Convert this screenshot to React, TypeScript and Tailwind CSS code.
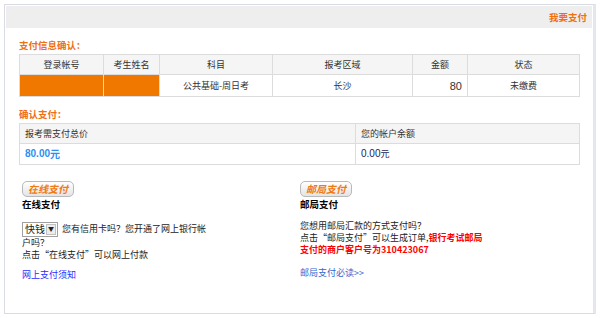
import React from "react";

const font = { fontFamily: '"Noto Sans CJK SC", "Liberation Sans", sans-serif' };

function Btn({ label }: { label: string }) {
  return (
    <div className="flex h-[16px] w-[52px] items-center justify-center rounded-[5px] border border-[#b9b9b9] bg-gradient-to-b from-white to-[#e4e4e4] text-[10px] font-bold italic leading-none text-[#f07a10]">
      {label}
    </div>
  );
}

export default function App() {
  return (
    <div className="h-[318px] w-[600px] bg-white pt-[4px] pl-[4px] text-[9px] leading-[12px] text-[#222]" style={font}>
      <div className="h-[310px] w-[592px] border border-[#d9dde3] border-r-[3px] border-r-[#e3e7ed] p-px">
        <div className="flex h-[22px] items-center justify-end bg-[#eeeeee] pr-[5px] text-[9.5px] font-bold text-[#f07010]">
          我要支付
        </div>
        <div className="pl-[13px] pr-[12px]">
          <div className="mt-[11px] text-[9.5px] font-bold text-[#f07010]">支付信息确认：</div>
          <div className="mt-[3px] w-[561px] border border-[#dcdcdc]">
            <div className="flex h-[19px] bg-[#f5f5f5] text-[#333]">
              <div className="flex w-[84px] items-center justify-center border-r border-[#dcdcdc]">登录帐号</div>
              <div className="flex w-[56px] items-center justify-center border-r border-[#dcdcdc]">考生姓名</div>
              <div className="flex w-[113px] items-center justify-center border-r border-[#dcdcdc]">科目</div>
              <div className="flex w-[140px] items-center justify-center border-r border-[#dcdcdc]">报考区域</div>
              <div className="flex w-[55px] items-center justify-center border-r border-[#dcdcdc]">金额</div>
              <div className="flex flex-1 items-center justify-center">状态</div>
            </div>
            <div className="flex h-[22px] border-t border-[#dcdcdc] text-[#333]">
              <div className="w-[84px] border-r border-[#dcdcdc] bg-[#f07800]"></div>
              <div className="w-[56px] border-r border-[#dcdcdc] bg-[#f07800]"></div>
              <div className="flex w-[113px] items-center justify-center border-r border-[#dcdcdc]">公共基础-周日考</div>
              <div className="flex w-[140px] items-center justify-center border-r border-[#dcdcdc]">长沙</div>
              <div className="flex w-[55px] items-center justify-end border-r border-[#dcdcdc] pr-[5px] text-[11px]" style={{ fontFamily: '"Liberation Sans", sans-serif' }}>80</div>
              <div className="flex flex-1 items-center justify-center">未缴费</div>
            </div>
          </div>

          <div className="mt-[11px] text-[9.5px] font-bold text-[#f07010]">确认支付：</div>
          <div className="mt-[3px] w-[561px] border border-[#dcdcdc]">
            <div className="flex h-[19px] bg-[#f5f5f5] text-[#333]">
              <div className="flex w-[336px] items-center border-r border-[#dcdcdc] pl-[5px]">报考需支付总价</div>
              <div className="flex flex-1 items-center pl-[5px]">您的帐户余额</div>
            </div>
            <div className="flex h-[21px] border-t border-[#dcdcdc]">
              <div className="flex w-[336px] items-center border-r border-[#dcdcdc] pl-[5px] text-[10px] font-bold text-[#2a8ff0]">
                <span style={{ fontFamily: '"Liberation Sans", sans-serif' }}>80.00</span>元
              </div>
              <div className="flex flex-1 items-center pl-[5px] text-[#1a1a55]">
                <span className="text-[10px]" style={{ fontFamily: '"Liberation Sans", sans-serif' }}>0.00</span>元
              </div>
            </div>
          </div>

          <div className="mt-[16px] flex whitespace-nowrap">
            <div className="ml-[3px] w-[278px]">
              <Btn label="在线支付" />
              <div className="mt-[1px] text-[9.5px] font-bold text-black">在线支付</div>
              <div className="mt-[11px] flex h-[16px] items-center">
                <div className="flex h-[15px] w-[36px] items-center border border-[#a0a0a0] bg-white">
                  <span className="pl-[2px] text-[10px]">快钱</span>
                  <span className="ml-auto mr-px flex h-[11px] w-[10px] items-center justify-center border border-[#c0c0c0] bg-[#ececec] text-[6px] leading-none">▼</span>
                </div>
                <span className="ml-[4px]">您有信用卡吗？您开通了网上银行帐</span>
              </div>
              <div>户吗？</div>
              <div>点击“在线支付”可以网上付款</div>
              <div className="mt-[8px] text-[#2b2bff]">网上支付须知</div>
            </div>
            <div className="w-[200px]">
              <Btn label="邮局支付" />
              <div className="mt-[1px] text-[9.5px] font-bold text-black">邮局支付</div>
              <div className="mt-[10px]">您想用邮局汇款的方式支付吗？</div>
              <div>
                点击“邮局支付”可以生成订单,<span className="font-bold text-[#ff0000]">银行考试邮局</span>
              </div>
              <div className="font-bold text-[#ff0000]">支付的商户客户号为310423067</div>
              <div className="mt-[11px] text-[#3366cc]">邮局支付必读&gt;&gt;</div>
            </div>
          </div>
        </div>
      </div>
    </div>
  );
}
